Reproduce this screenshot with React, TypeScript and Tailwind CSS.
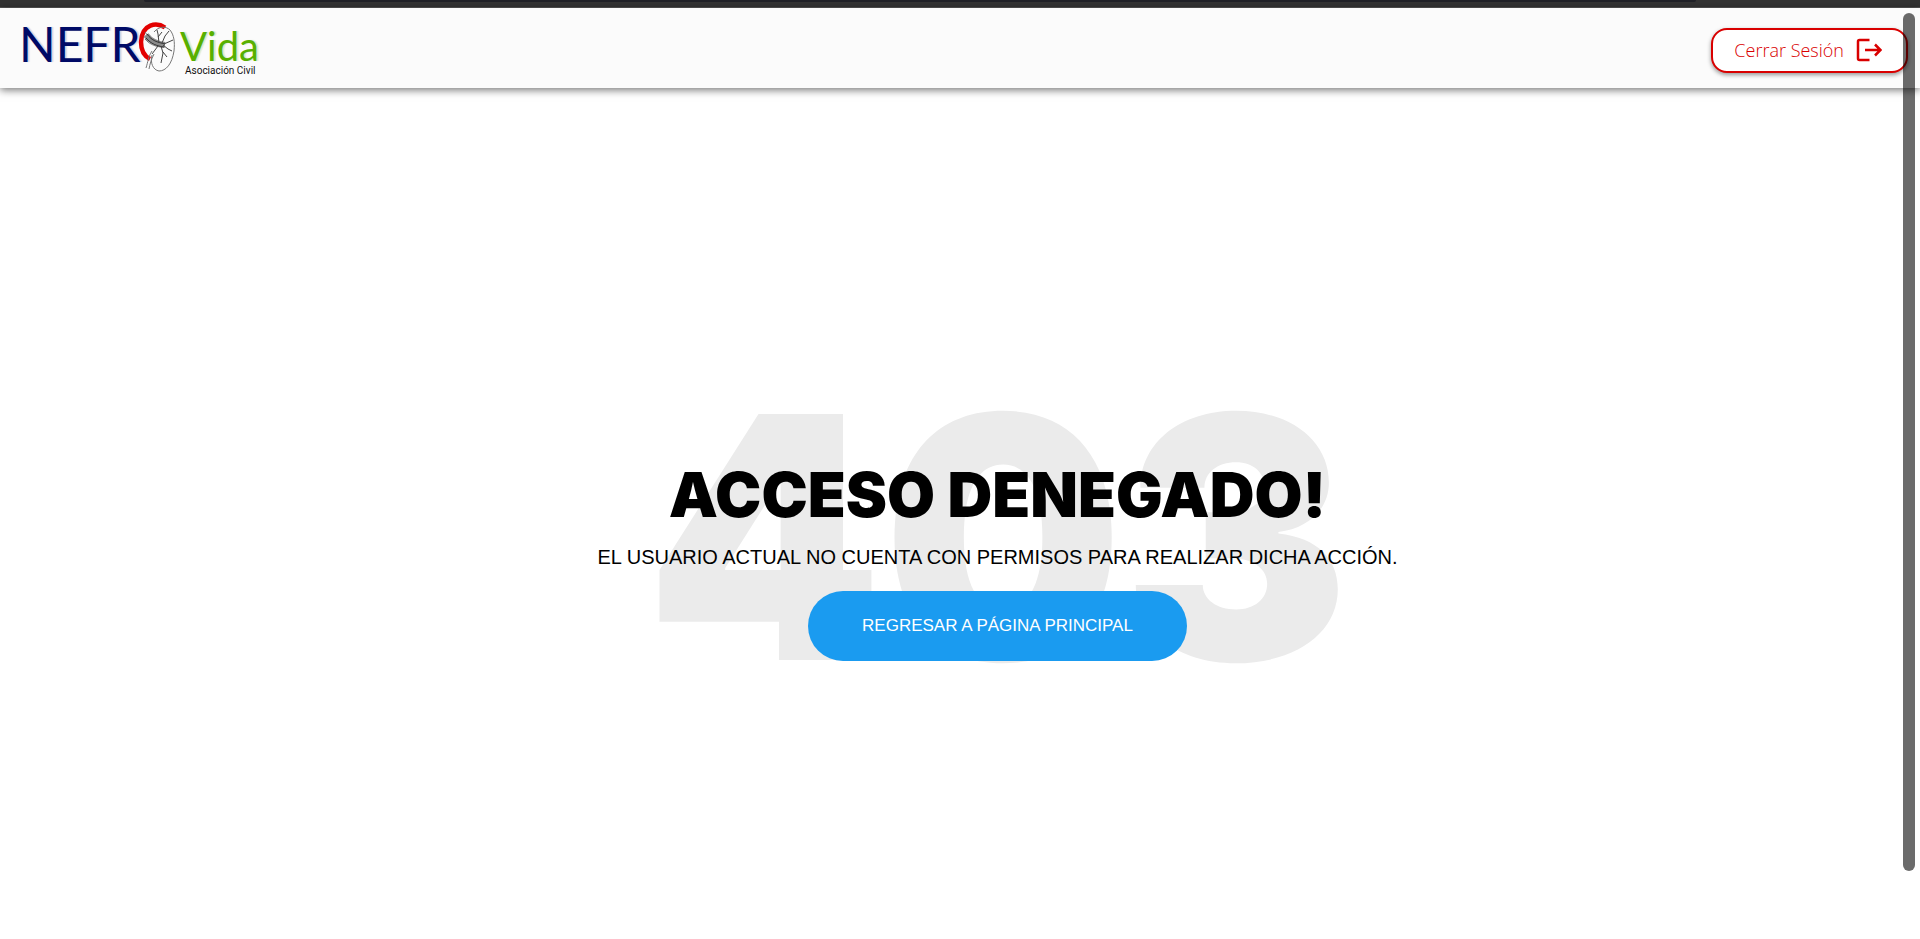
function Logo() {
  return (
    <svg viewBox="0 0 248 58" role="img" aria-label="NefroVida Asociación Civil" className="h-[58px] w-[248px] overflow-visible">
      <g fontFamily="Lato, sans-serif">
        <text x="3" y="43" fontSize="48" fill="#000a66" className="[text-shadow:2px_0_1px_#d5d5e6]">
          NEFR
        </text>
        <text x="164" y="42" fontSize="40" fill="#58b000" className="[text-shadow:2px_0_1px_#dcead2]">
          Vida
        </text>
      </g>
      <text x="169" y="55" fontSize="10" fill="#111" fontFamily="Roboto, sans-serif">
        Asociación Civil
      </text>
      <path
        d="M143 8 C150 5 155 8 158 17 C161 32 155 50 144 51 C138 50 135 44 136 36 L133 20 Z"
        fill="#fbfbfb"
      />
      <path d="M149 8.500 C141 3 126 4 125 23 C125 32 128 37 134 40" fill="none" stroke="#e30000" strokeWidth="4.500" />
      <g fill="none" stroke="#777" strokeWidth="1">
        <path d="M138 13 C143 7 150 7 154 11 C158 16 159 23 158 32 C156 45 150 52 143 52 C137 51 134 44 136 36" />
        <path d="M136 32 C132 38 132 43 130 49 M138 35 C135 41 134 45 133 50" />
        <path d="M129 13 C134 21 141 23 148 25 M129 20 C134 26 141 28 147 28" />
        <path d="M130 16 C135 23 141 25 149 26" stroke="#8a8a8a" strokeWidth="6" />
        <path d="M131 15 C136 22 141 23 149 25 M130 19 C135 25 141 27 148 28" stroke="#333" strokeWidth="1" />
        <path
          d="M143 24 L142 15 L141 11 M142 18 L146 13 M146 24 L149 17 L153 12 M148 25 L157 21 M147 26 L152 30 L156 32 M145 27 L147 34 L145 44 M147 33 L151 38 M142 27 L136 35"
          stroke="#444"
        />
      </g>
    </svg>
  );
}

function ExitIcon() {
  return (
    <svg viewBox="0 0 26 24" className="h-6 w-[26px]" fill="none" stroke="currentColor" strokeWidth="2.500" aria-hidden="true">
      <path d="M13.500 2 H3.500 Q2 2 2 3.500 V20.500 Q2 22 3.500 22 H13.500" />
      <path d="M9 12 H24.500 M19 6.500 L24.500 12 L19 17.500" />
    </svg>
  );
}

export default function App() {
  return (
    <div className="relative flex min-h-screen flex-col bg-white font-['Liberation_Sans',Arial,sans-serif] text-black">
      <div className="h-2 border-b border-[#555] bg-[#333]">
        <div className="ml-36 mr-56 h-0.5 rounded-b-lg bg-[#202127]" />
      </div>
      <header className="flex h-20 items-center justify-between bg-[#fbfbfb] pl-4 pr-3 shadow-[0_2px_8px_rgba(0,0,0,0.55)]">
        <a href="#inicio">
          <Logo />
        </a>
        <button
          type="button"
          className="mt-1 flex h-[45px] items-center gap-3 rounded-2xl border-2 border-[#d90000] bg-white pl-[21px] pr-6 font-['Open_Sans',sans-serif] text-lg font-light text-[#d90000] shadow-[0_2px_4px_rgba(0,0,0,0.4)]"
        >
          Cerrar Sesión
          <ExitIcon />
        </button>
      </header>

      <main className="flex grow flex-col items-center justify-center pt-11 pl-[75px]">
        <div className="grid place-items-center">
          <div
            aria-hidden="true"
            className="col-start-1 row-start-1 pt-1 font-['Inter',sans-serif] text-[338px] leading-none font-black text-[#ebebeb]"
          >
            403
          </div>
          <div className="z-10 col-start-1 row-start-1 flex flex-col items-center pt-12">
            <h1 className="font-['Inter',sans-serif] text-[62px] leading-[72px] font-black">ACCESO DENEGADO!</h1>
            <p className="mt-3 text-xl leading-7">EL USUARIO ACTUAL NO CUENTA CON PERMISOS PARA REALIZAR DICHA ACCIÓN.</p>
            <a
              href="#principal"
              className="mt-5 flex h-[70px] items-center rounded-full bg-[#1a9bf0] px-[54px] text-[17px] font-medium text-white"
            >
              REGRESAR A PÁGINA PRINCIPAL
            </a>
          </div>
        </div>
      </main>

      <div aria-hidden="true" className="absolute top-[13px] right-[5px] bottom-[68px] w-3 rounded-full bg-black/58" />
    </div>
  );
}
